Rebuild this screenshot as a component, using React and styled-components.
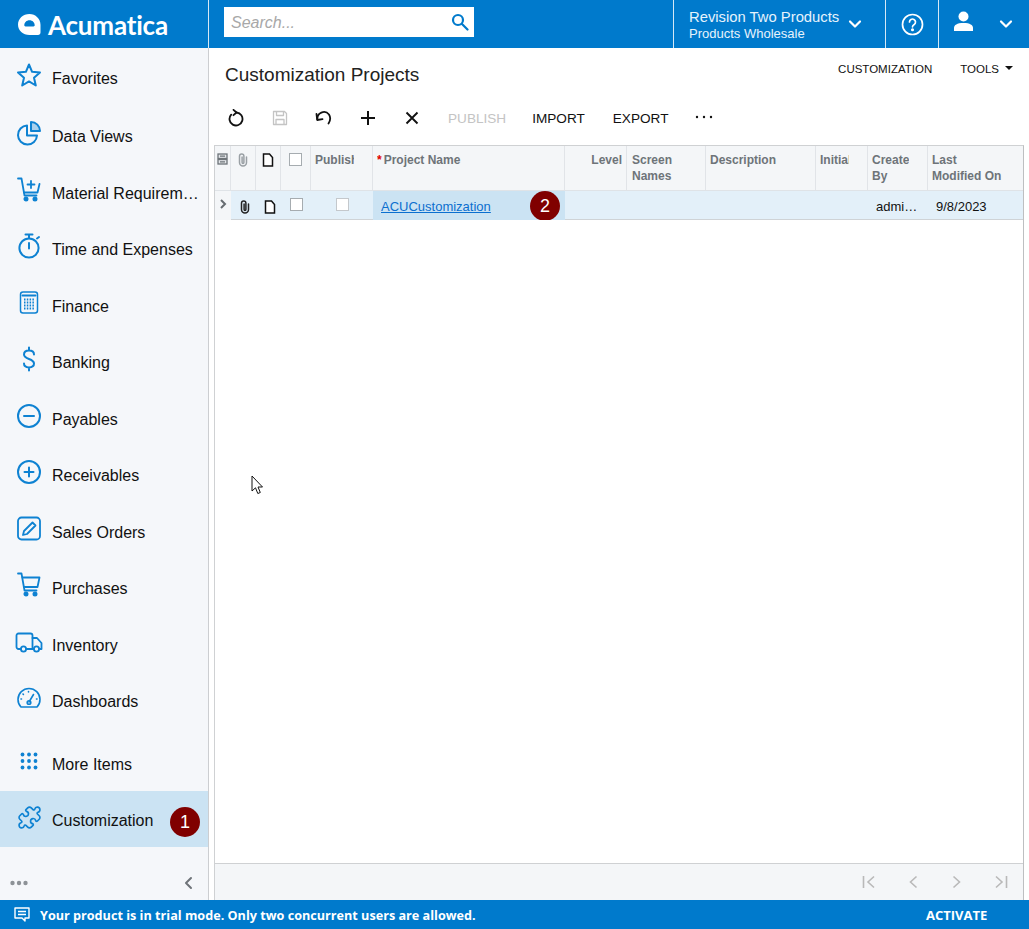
import styled, { createGlobalStyle } from "styled-components";
import { Puzzle } from "lucide-react";

const BLUE = "#007acc";
const COLS = "16px 25px 25px 30px 62px 192px 62px 79px 110px 52px 60px 1fr";

const Global = createGlobalStyle`
	html, body { margin: 0; padding: 0; height: 100%; background: #fff; }
	body { font-family: "Liberation Sans", Arial, sans-serif; color: #111; overflow: hidden; }
	* { box-sizing: border-box; }
`;

const Page = styled.div`
	position: relative;
	width: 1029px;
	height: 929px;
	display: grid;
	grid-template-rows: 48px 1fr 29px;
	overflow: hidden;
`;

/* top bar */
const TopBar = styled.header`
	background: ${BLUE};
	display: flex;
	align-items: stretch;
	color: #fff;
`;
const Brand = styled.div`
	width: 209px;
	display: flex;
	align-items: center;
	gap: 7px;
	padding-left: 18px;
	border-right: 1px solid #d5e8f6;
`;
const BrandName = styled.span`
	font-family: Lato, sans-serif;
	font-size: 26px;
	font-weight: 700;
	letter-spacing: -0.2px;
	margin-top: 1px;
`;
const SearchWrap = styled.div`
	width: 250px;
	height: 30px;
	margin: 7px 0 0 15px;
	background: #fff;
	display: flex;
	align-items: center;
	justify-content: space-between;
	padding: 1px 5px 0 7px;
`;
const SearchText = styled.span`
	font-size: 16px;
	font-style: italic;
	color: #a8a8a8;
`;
const TopSpacer = styled.div`
	flex: 1;
`;
const TopCell = styled.div`
	display: flex;
	align-items: center;
	width: ${(p) => p.$w}px;
	padding-left: ${(p) => p.$pl || 0}px;
	border-left: 1px solid #d5e8f6;
	gap: ${(p) => p.$gap || 0}px;
`;
const Company = styled.div`
	display: flex;
	flex-direction: column;
	width: 150px;
	margin-right: 9px;
	white-space: nowrap;
	padding-top: 1px;
`;
const CompanyName = styled.span`
	font-size: 14.8px;
	line-height: 18px;
	color: #e6f3fc;
`;
const CompanyBranch = styled.span`
	font-size: 13px;
	line-height: 15px;
	color: #e6f3fc;
`;

/* body */
const Body = styled.div`
	display: grid;
	grid-template-columns: 209px 1fr;
	min-height: 0;
`;
const Side = styled.nav`
	background: #f5f7fa;
	border-right: 1px solid #ccced1;
	padding-top: 2px;
	display: flex;
	flex-direction: column;
`;
const NavItem = styled.div`
	position: relative;
	height: ${(p) => p.$h || 56.5}px;
	flex: none;
	display: flex;
	align-items: center;
	padding: ${(p) => p.$pt || 0}px 0 ${(p) => p.$pb || 0}px 15px;
	font-size: 16px;
	background: ${(p) => (p.$active ? "#cbe3f3" : "transparent")};
	margin-top: ${(p) => p.$mt || 0}px;
	white-space: nowrap;
`;
const NavIcon = styled.span`
	width: 28px;
	height: 28px;
	margin: -6px 9px 0 0;
	display: flex;
	align-items: center;
	justify-content: center;
	color: #0e82d2;
	flex: none;
`;
const NavText = styled.span`
	width: 147px;
	margin-top: 2px;
	overflow: hidden;
	text-overflow: ellipsis;
`;
const Badge = styled.span`
	width: 30px;
	height: 30px;
	border-radius: 50%;
	background: #800000;
	color: #fff;
	font-size: 18px;
	display: flex;
	align-items: center;
	justify-content: center;
	flex: none;
`;
const NavBadge = styled(Badge)`
	position: absolute;
	left: 170px;
	top: 16px;
`;
const SideFoot = styled.div`
	margin-top: auto;
	height: 36px;
	display: flex;
	align-items: center;
	justify-content: space-between;
	padding: 2px 15px 0 10px;
`;

/* main */
const Main = styled.main`
	display: flex;
	flex-direction: column;
	padding: 0 5px 0 5px;
	min-width: 0;
`;
const TitleRow = styled.div`
	height: 50px;
	display: flex;
	justify-content: space-between;
	padding: 14px 0 0 11px;
`;
const Title = styled.h1`
	margin: 0;
	font-size: 19px;
	font-weight: 400;
	line-height: 26px;
	color: #222;
`;
const TopLinks = styled.div`
	display: flex;
	gap: 28px;
	font-size: 11.5px;
	line-height: 16px;
	padding: 0 11px 0 0;
	margin-top: -1px;
`;
const LinkWithCaret = styled.span`
	display: flex;
	align-items: center;
	gap: 6px;
	height: 16px;
`;
const Caret = styled.i`
	width: 0;
	height: 0;
	border-left: 4px solid transparent;
	border-right: 4px solid transparent;
	border-top: 4px solid #111;
	margin-top: -3px;
`;
const Toolbar = styled.div`
	height: 46px;
	display: flex;
	align-items: center;
	margin: -3px 0 4px;
`;
const ToolIcon = styled.span`
	width: 44px;
	height: 28px;
	display: flex;
	align-items: center;
	justify-content: center;
	color: ${(p) => (p.$off ? "#c4c4c4" : "#111")};
`;
const ToolText = styled.span`
	padding: ${(p) => (p.$off ? "0 12px 0 14px" : "0 14px")};
	font-size: 13.6px;
	color: ${(p) => (p.$off ? "#c4c4c4" : "#111")};
`;
const ToolDots = styled.svg`
	margin: -3px 0 0 13px;
`;
const Grid = styled.section`
	flex: 1;
	min-height: 0;
	display: flex;
	flex-direction: column;
	border: 1px solid #cfd1d3;
	border-bottom: 0;
	border-right: 1px solid #bdbfc1;
`;
const HeadRow = styled.div`
	display: grid;
	grid-template-columns: ${COLS};
	height: 45px;
	background: #f4f6f8;
	border-bottom: 1px solid #dfe3e7;
`;
const HeadCell = styled.div`
	border-right: 1px solid #e1e4e8;
	padding: 6px ${(p) => p.$pr ?? 4}px 0 ${(p) => p.$pl ?? 4}px;
	font-size: 12px;
	line-height: 16px;
	font-weight: 700;
	color: #6e7479;
	text-align: ${(p) => (p.$right ? "right" : "left")};
	&:last-child { border-right: 0; }
`;
const HeadIcon = styled.div`
	border-right: 1px solid #e1e4e8;
	padding-top: 7px;
	display: flex;
	justify-content: center;
`;
const HeadLabel = styled.span`
	display: block;
	overflow: hidden;
	white-space: ${(p) => (p.$wrap ? "normal" : "nowrap")};
`;
const Req = styled.span`
	color: #e00000;
	margin-right: 2px;
`;
const DataRow = styled.div`
	display: grid;
	grid-template-columns: ${COLS};
	height: 29px;
	background: #e3f0f9;
	border-bottom: 1px solid #cfd3d6;
`;
const Cell = styled.div`
	display: flex;
	align-items: center;
	justify-content: ${(p) => (p.$center ? "center" : "flex-start")};
	padding-left: ${(p) => p.$pl || 0}px;
	padding-top: 1px;
	font-size: 13px;
	background: ${(p) => p.$bg || "transparent"};
	white-space: nowrap;
	overflow: hidden;
`;
const NameCell = styled(Cell)`
	justify-content: space-between;
	padding: 0 5px 0 8px;
	overflow: visible;
`;
const ProjectLink = styled.a`
	color: #0b6fcf;
	text-decoration: underline;
	font-size: 13px;
`;
const Check = styled.span`
	width: 13px;
	height: 13px;
	border: ${(p) => (p.$light ? "1px solid #c4c8cc" : "1.5px solid #a6acb0")};
	background: #fff;
	display: block;
	margin-top: ${(p) => p.$mt || 0}px;
`;
const GridBody = styled.div`
	flex: 1;
	background: #fff;
`;
const Pager = styled.div`
	height: 37px;
	background: #f4f6f8;
	border-top: 1px solid #cfd1d3;
	display: flex;
	align-items: center;
	justify-content: flex-end;
`;
const PagerBtn = styled.span`
	width: 44px;
	height: 28px;
	display: flex;
	align-items: center;
	justify-content: center;
	color: #b9b9b9;
`;

/* status bar */
const StatusBar = styled.footer`
	background: ${BLUE};
	color: #fff;
	display: flex;
	align-items: center;
	padding-left: 14px;
	font-family: "Open Sans", sans-serif;
	font-weight: 700;
`;
const StatusText = styled.span`
	margin-left: 10px;
	flex: 1;
	font-size: 12.65px;
`;
const Activate = styled.span`
	width: 103px;
	font-size: 13px;
`;
const Cursor = styled.svg`
	position: absolute;
	left: 251px;
	top: 475px;
`;

const Ico = ({ w = 26, h = 26, sw = 2, children }) => (
	<svg width={w} height={h} viewBox={`0 0 ${w} ${h}`} fill="none" stroke="currentColor" strokeWidth={sw} strokeLinecap="round" strokeLinejoin="round">
		{children}
	</svg>
);

const icons = {
	star: <Ico><path d="M13 2.500l3.100 7.300 7.900.7-6 5.200 1.800 7.800-6.800-4.100-6.800 4.100 1.800-7.800-6-5.200 7.900-.7z" /></Ico>,
	pie: <Ico><path d="M11 5.500a9.500 9.500 0 1 0 10 10H11z" /><path d="M15 2a9 9 0 0 1 9 9h-9z" fill="#a9d0ec" /></Ico>,
	cartPlus: <Ico sw={1.8}><path d="M2 1.500h3.500l3 17h12" /><path d="M23.500 7l-2 8.500H8" /><path d="M15 4v7M11.500 7.500h7" /><circle cx="10" cy="22" r="1.600" fill="currentColor" /><circle cx="19" cy="22" r="1.600" fill="currentColor" /></Ico>,
	timer: <Ico><circle cx="13" cy="15" r="9.600" /><path d="M9.500 1.500h7M13 2v3M13 10v5.500M21 5.500l2-1.500" /></Ico>,
	calc: <Ico sw={1.5}><rect x="4.500" y="2" width="17" height="21" rx="2.500" /><path d="M6.500 5.500h13" strokeWidth="2" /><path d="M8 9.500h10M8 12.500h10M8 15.500h10M8 18.500h10" strokeWidth="1.800" strokeDasharray="1.500 1.300" strokeLinecap="butt" /></Ico>,
	dollar: <Ico><path d="M18 8.500C18 6 16 4.600 13 4.600S8 6.200 8 8.600c0 5.400 10 3.400 10 9 0 2.400-2 3.800-5 3.800s-5-1.400-5-3.800M13 1.500v3M13 21.500v3" /></Ico>,
	minus: <Ico><circle cx="13" cy="13" r="11" /><path d="M8 13h10" /></Ico>,
	plus: <Ico><circle cx="13" cy="13" r="11" /><path d="M13 8.500v9M8.500 13h9" /></Ico>,
	edit: <Ico sw={1.8}><rect x="2" y="1.500" width="22" height="22" rx="3.500" /><path d="M7 19l1-4 8.500-8.500 3 3L11 18z" /></Ico>,
	cart: <Ico sw={1.8}><path d="M2 1.500h3.500l3 17h12" /><path d="M6.500 5.500h17l-2 9.500H8" /><circle cx="10" cy="22" r="1.600" fill="currentColor" /><circle cx="19" cy="22" r="1.600" fill="currentColor" /></Ico>,
	truck: <Ico w={28} sw={1.8}><path d="M6 20H3.500a2 2 0 0 1-2-2V6.500a2 2 0 0 1 2-2h12a2 2 0 0 1 2 2V20h-6" /><path d="M17.500 9h4.500l4.500 5v6h-2" /><path d="M17.500 20h1" /><circle cx="8.500" cy="20" r="2.600" /><circle cx="21.500" cy="20" r="2.600" /></Ico>,
	gauge: <Ico sw={1.6}><path d="M5 22a11 11 0 1 1 16 0z" /><path d="M13 17l4.500-7.500" /><circle cx="13" cy="17.500" r="1.800" /><path d="M5 14h.5M7 9l.4.4M12.500 6.500v.5M20.500 14h.5" /></Ico>,
	dots: <Ico w={18} h={18} sw={0}>{[2.5, 9, 15.5].flatMap((y) => [2.5, 9, 15.5].map((x) => <circle key={`${x}-${y}`} cx={x} cy={y} r="1.900" fill="currentColor" />))}</Ico>,
	puzzle: <Puzzle size={25} strokeWidth={1.6} />,
};

const navItems = [
	["star", "Favorites", 58, 2],
	["pie", "Data Views"],
	["cartPlus", "Material Requirements Planning"],
	["timer", "Time and Expenses"],
	["calc", "Finance"],
	["dollar", "Banking"],
	["minus", "Payables"],
	["plus", "Receivables"],
	["edit", "Sales Orders"],
	["cart", "Purchases"],
	["truck", "Inventory"],
	["gauge", "Dashboards"],
];

const Clip = ({ color = "#9aa0a5" }) => (
	<svg width="10" height="14" viewBox="0 0 10 14" fill="none" stroke={color} strokeWidth="1.500" strokeLinecap="round">
		<path d="M8.500 4v5.500a3.500 3.500 0 0 1-7 0V3.200a2.200 2.200 0 0 1 4.400 0V9.500a.9.9 0 0 1-1.800 0V4" />
	</svg>
);
const Doc = () => (
	<svg width="12" height="14" viewBox="0 0 12 14" fill="#fff" stroke="#111" strokeWidth="1.500" strokeLinejoin="miter">
		<path d="M1.500 1h6l3 3.500V13h-9z" />
	</svg>
);
const Chevron = () => (
	<svg width="14" height="10" viewBox="0 0 14 10" fill="none" stroke="#fff" strokeWidth="2.200" strokeLinecap="round" strokeLinejoin="round">
		<path d="M2 2.500l5 5 5-5" />
	</svg>
);

function App() {
	return (
		<Page>
			<Global />
			<TopBar>
				<Brand>
					<svg width="23" height="21" viewBox="0 0 23 21">
						<path fillRule="evenodd" fill="#fff" d="M11.500 0C17.500 0 22.500 4.800 22.500 10.800V18.500c0 1.400-1 2.500-2.500 2.500H11.500C5 21 0 16.500 0 10.500 0 4.800 5 0 11.500 0zm0 6.200c-3 0-5.200 2.200-5.200 5 0 .7.500 1.200 1.200 1.200h8c.7 0 1.200-.5 1.200-1.200 0-2.800-2.200-5-5.200-5z" />
					</svg>
					<BrandName>Acumatica</BrandName>
				</Brand>
				<SearchWrap>
					<SearchText>Search...</SearchText>
					<svg width="18" height="18" viewBox="0 0 18 18" fill="none" stroke={BLUE} strokeWidth="2.200" strokeLinecap="round" style={{ marginTop: -2 }}>
						<circle cx="7" cy="7" r="5" />
						<path d="M11 11l5.500 5.500" />
					</svg>
				</SearchWrap>
				<TopSpacer />
				<TopCell $w={212} $pl={15}>
					<Company>
						<CompanyName>Revision Two Products</CompanyName>
						<CompanyBranch>Products Wholesale</CompanyBranch>
					</Company>
					<Chevron />
				</TopCell>
				<TopCell $w={53} $pl={15}>
					<svg width="23" height="23" viewBox="0 0 23 23" fill="none" stroke="#fff" strokeWidth="1.700" strokeLinecap="round">
						<circle cx="11.500" cy="11.500" r="10" />
						<path d="M8.500 9a3 3 0 1 1 4.700 2.500c-1.100.7-1.700 1.200-1.700 2.300" />
						<circle cx="11.500" cy="16.800" r=".7" fill="#fff" />
					</svg>
				</TopCell>
				<TopCell $w={91} $pl={14} $gap={25}>
					<svg width="21" height="20" viewBox="0 0 21 20" fill="#fff" style={{ marginTop: -6 }}>
						<circle cx="10.500" cy="5.500" r="5" />
						<path d="M1 20v-3c0-3 3-5 9.500-5s9.500 2 9.500 5v3z" />
					</svg>
					<Chevron />
				</TopCell>
			</TopBar>

			<Body>
				<Side>
					{navItems.map(([icon, label, h, pb]) => (
						<NavItem key={label} $h={h} $pb={pb}>
							<NavIcon>{icons[icon]}</NavIcon>
							<NavText>{label}</NavText>
						</NavItem>
					))}
					<NavItem $mt={7} $h={54.5}>
						<NavIcon>{icons.dots}</NavIcon>
						<NavText>More Items</NavText>
					</NavItem>
					<NavItem $active $h={56} $pt={2}>
						<NavIcon>{icons.puzzle}</NavIcon>
						<NavText>Customization</NavText>
						<NavBadge>1</NavBadge>
					</NavItem>
					<SideFoot>
						<svg width="18" height="6" viewBox="0 0 18 6" fill="#8d9297">
							<circle cx="2.500" cy="3" r="2.200" />
							<circle cx="9" cy="3" r="2.200" />
							<circle cx="15.500" cy="3" r="2.200" />
						</svg>
						<svg width="10" height="14" viewBox="0 0 10 14" fill="none" stroke="#6f7479" strokeWidth="2" strokeLinecap="round" strokeLinejoin="round">
							<path d="M8 2L3 7l5 5" />
						</svg>
					</SideFoot>
				</Side>

				<Main>
					<TitleRow>
						<Title>Customization Projects</Title>
						<TopLinks>
							<span>CUSTOMIZATION</span>
							<LinkWithCaret>TOOLS <Caret /></LinkWithCaret>
						</TopLinks>
					</TitleRow>
					<Toolbar>
						<ToolIcon>
							<svg width="18" height="18" viewBox="0 0 18 18" fill="none" stroke="currentColor" strokeWidth="1.800" strokeLinecap="round" strokeLinejoin="round">
								<path d="M9.500 3.500A6.500 6.500 0 1 1 4.200 5.600" />
								<path d="M6.500 .8l3 2.700-3 2.700" />
							</svg>
						</ToolIcon>
						<ToolIcon $off>
							<svg width="16" height="16" viewBox="0 0 16 16" fill="none" stroke="currentColor" strokeWidth="1.300" strokeLinejoin="round">
								<path d="M1.500 1.500h11l2 2v11h-13z" />
								<path d="M4.500 1.500v4h7v-4M4 14.500v-5h8v5" />
							</svg>
						</ToolIcon>
						<ToolIcon>
							<svg width="18" height="16" viewBox="0 0 18 16" fill="none" stroke="currentColor" strokeWidth="1.800" strokeLinecap="round" strokeLinejoin="round">
								<path d="M2.500 9.500A6.500 6.500 0 0 1 14 4.500C15.500 7 15.500 10.500 13.500 13.500" />
								<path d="M1.500 4l.7 6 5.300-.8" />
							</svg>
						</ToolIcon>
						<ToolIcon>
							<svg width="16" height="16" viewBox="0 0 16 16" fill="none" stroke="currentColor" strokeWidth="2">
								<path d="M8 1v14M1 8h14" />
							</svg>
						</ToolIcon>
						<ToolIcon>
							<svg width="14" height="14" viewBox="0 0 14 14" fill="none" stroke="currentColor" strokeWidth="1.900">
								<path d="M1.500 1.500l11 11M12.500 1.500l-11 11" />
							</svg>
						</ToolIcon>
						<ToolText $off>PUBLISH</ToolText>
						<ToolText>IMPORT</ToolText>
						<ToolText>EXPORT</ToolText>
						<ToolDots width="18" height="4" viewBox="0 0 18 4" fill="#111">
							<circle cx="2" cy="2" r="1.200" />
							<circle cx="9" cy="2" r="1.200" />
							<circle cx="16" cy="2" r="1.200" />
						</ToolDots>
					</Toolbar>
					<Grid>
						<HeadRow>
							<HeadIcon>
								<svg width="11" height="12" viewBox="0 0 11 12" fill="#e3e6e9" stroke="#6e7479" strokeWidth="1.300">
									<rect x="1" y="1" width="9" height="4.500" />
									<rect x="1" y="6.500" width="9" height="4.500" />
									<path d="M3 3.200h5M3 8.800h5" />
								</svg>
							</HeadIcon>
							<HeadIcon><Clip /></HeadIcon>
							<HeadIcon><Doc /></HeadIcon>
							<HeadIcon><Check /></HeadIcon>
							<HeadCell $pr={18}><HeadLabel>Published</HeadLabel></HeadCell>
							<HeadCell><HeadLabel><Req>*</Req>Project Name</HeadLabel></HeadCell>
							<HeadCell $right><HeadLabel>Level</HeadLabel></HeadCell>
							<HeadCell $pl={5}><HeadLabel $wrap>Screen Names</HeadLabel></HeadCell>
							<HeadCell><HeadLabel>Description</HeadLabel></HeadCell>
							<HeadCell $pr={18}><HeadLabel>Initial Version</HeadLabel></HeadCell>
							<HeadCell $pr={18}><HeadLabel $wrap>Created By</HeadLabel></HeadCell>
							<HeadCell><HeadLabel>Last<br />Modified On</HeadLabel></HeadCell>
						</HeadRow>
						<DataRow>
							<Cell $center $bg="#f4f6f8">
								<svg width="8" height="12" viewBox="0 0 8 12" fill="none" stroke="#666c71" strokeWidth="2" style={{ marginTop: -5 }}>
									<path d="M2 2l4 4-4 4" />
								</svg>
							</Cell>
							<Cell $center $pl={2}><Clip color="#222" /></Cell>
							<Cell $center $pl={2}><Doc /></Cell>
							<Cell $center><Check $mt={-4} /></Cell>
							<Cell $center><Check $light $mt={-4} /></Cell>
							<NameCell $bg="#cbe3f3">
								<ProjectLink>ACUCustomization</ProjectLink>
								<Badge>2</Badge>
							</NameCell>
							<Cell />
							<Cell />
							<Cell />
							<Cell />
							<Cell $pl={8}>admi…</Cell>
							<Cell $pl={8}>9/8/2023</Cell>
						</DataRow>
						<GridBody />
						<Pager>
							<PagerBtn>
								<svg width="14" height="14" viewBox="0 0 14 14" fill="none" stroke="currentColor" strokeWidth="1.600"><path d="M1.500 1v12M12 1.500L6 7l6 5.500" /></svg>
							</PagerBtn>
							<PagerBtn>
								<svg width="10" height="14" viewBox="0 0 10 14" fill="none" stroke="currentColor" strokeWidth="1.600"><path d="M8.500 1.500L2.500 7l6 5.500" /></svg>
							</PagerBtn>
							<PagerBtn>
								<svg width="10" height="14" viewBox="0 0 10 14" fill="none" stroke="currentColor" strokeWidth="1.600"><path d="M1.500 1.500l6 5.500-6 5.500" /></svg>
							</PagerBtn>
							<PagerBtn>
								<svg width="14" height="14" viewBox="0 0 14 14" fill="none" stroke="currentColor" strokeWidth="1.600"><path d="M12.500 1v12M2 1.500L8 7l-6 5.500" /></svg>
							</PagerBtn>
						</Pager>
					</Grid>
				</Main>
			</Body>

			<StatusBar>
				<svg width="16" height="15" viewBox="0 0 16 15" fill="none" stroke="#fff" strokeWidth="1.400" strokeLinejoin="round">
					<path d="M1 1h14v10h-4v3l-3-3H1z" />
					<path d="M4 4.500h8M4 7.500h8" />
				</svg>
				<StatusText>Your product is in trial mode. Only two concurrent users are allowed.</StatusText>
				<Activate>ACTIVATE</Activate>
			</StatusBar>
			<Cursor width="13" height="20" viewBox="0 0 13 20">
				<path d="M1 1v15l3.500-3.200 2.300 5.700 2.500-1-2.300-5.500H11.500z" fill="#fff" stroke="#111" strokeWidth="1" strokeLinejoin="round" />
			</Cursor>
		</Page>
	);
}

export default App;
